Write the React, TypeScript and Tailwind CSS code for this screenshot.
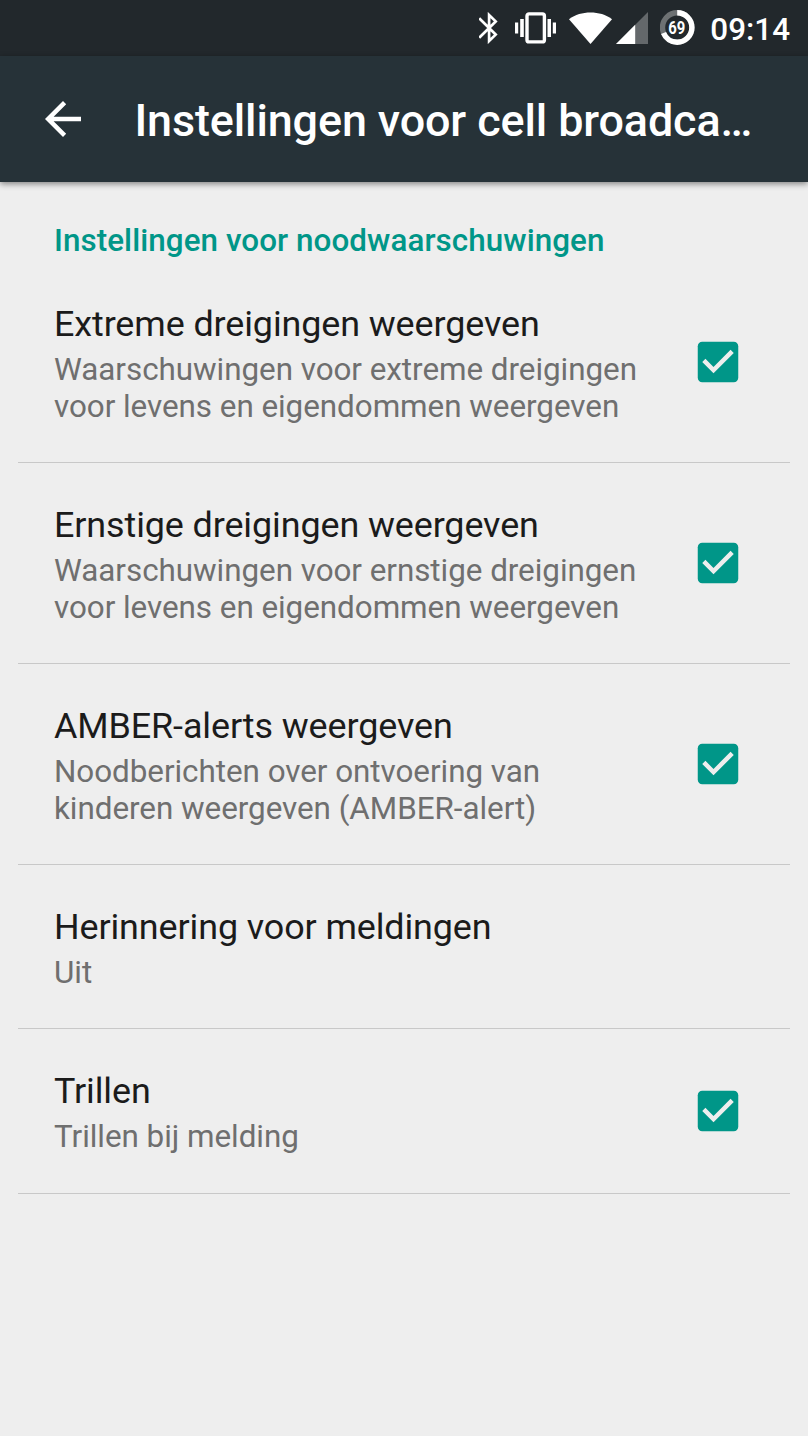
interface Setting {
  title: string
  summary: string
  checked?: boolean
}

const settings: Setting[] = [
  {
    title: 'Extreme dreigingen weergeven',
    summary: 'Waarschuwingen voor extreme dreigingen voor levens en eigendommen weergeven',
    checked: true,
  },
  {
    title: 'Ernstige dreigingen weergeven',
    summary: 'Waarschuwingen voor ernstige dreigingen voor levens en eigendommen weergeven',
    checked: true,
  },
  {
    title: 'AMBER-alerts weergeven',
    summary: 'Noodberichten over ontvoering van kinderen weergeven (AMBER-alert)',
    checked: true,
  },
  { title: 'Herinnering voor meldingen', summary: 'Uit' },
  { title: 'Trillen', summary: 'Trillen bij melding', checked: true },
]

function StatusBar() {
  return (
    <div className="flex h-14 items-center justify-end bg-[#22282c] pr-[18px] text-white">
      <svg className="h-8 w-5" viewBox="0 0 20 32" fill="none" stroke="currentColor" strokeWidth="2.7">
        <path d="M.2 6.2 16.700 22.600 10.100 29V3L16.700 9.400.2 25.800" />
      </svg>
      <svg className="ml-4 h-8 w-[41px]" viewBox="0 0 41 32">
        <rect x="12" y="1.9" width="17.4" height="28" rx="2" fill="none" stroke="currentColor" strokeWidth="3.4" />
        <path d="M0 10.500h3.200v11H0zM5.200 7h3.600v18H5.200zM32.500 7h3.500v18h-3.500zM37.800 10.500H41v11h-3.200z" fill="currentColor" />
      </svg>
      <svg className="ml-[13px] h-8 w-11" viewBox="0 0 44 32">
        <path d="M21.500 32 0 7.200C6.300 2.600 13.500.5 21.500.5s15.300 2.100 21.500 6.700z" fill="currentColor" />
      </svg>
      <svg className="ml-[3px] h-8 w-8" viewBox="0 0 32 32">
        <path d="M0 32 32 0v32z" fill="#64686b" />
        <path d="M0 32 19.200 12.800V32z" fill="currentColor" />
      </svg>
      <svg className="ml-3 h-9 w-9" viewBox="0 0 36 36">
        <circle cx="17.200" cy="17.500" r="14.700" fill="none" stroke="#6d7173" strokeWidth="5.400" />
        <circle
          cx="17.200"
          cy="17.500"
          r="14.700"
          fill="none"
          stroke="currentColor"
          strokeWidth="5.400"
          pathLength="100"
          strokeDasharray="69 31"
          transform="rotate(-90 17.200 17.500)"
        />
        <text
          x="16.800"
          y="24"
          textAnchor="middle"
          textLength="17"
          lengthAdjust="spacingAndGlyphs"
          className="text-[18.5px] font-bold"
          fill="currentColor"
        >
          69
        </text>
      </svg>
      <span className="ml-[14px] pt-[3px] text-[31.4px] leading-none font-medium">09:14</span>
    </div>
  )
}

function Toolbar() {
  return (
    <header className="flex h-[126px] items-center bg-[#263238] pl-9 text-white shadow-[0_2px_6px_rgba(0,0,0,0.45)]">
      <button aria-label="Terug">
        <svg className="h-[54px] w-[54px]" viewBox="0 0 24 24" fill="currentColor">
          <path d="M20 11H7.830l5.590-5.590L12 4l-8 8 8 8 1.410-1.410L7.830 13H20v-2z" />
        </svg>
      </button>
      <h1 className="ml-[44.5px] w-[625px] truncate pt-[3px] text-[44.9px] leading-[53px] font-medium tracking-[-0.11px]">
        Instellingen voor cell broadca…
      </h1>
    </header>
  )
}

function Checkbox() {
  return (
    <svg className="h-[54px] w-[54px] shrink-0" viewBox="0 0 24 24" role="checkbox" aria-checked="true">
      <rect x="3" y="3" width="18" height="18" rx="2" fill="#009688" />
      <path d="M10 17l-5-5 1.410-1.420L10 14.170l7.590-7.590L19 8z" fill="#eee" />
    </svg>
  )
}

function SettingRow({ title, summary, checked }: Setting) {
  return (
    <li className="mx-[18px] flex items-center justify-between border-b border-[#c8c8c8] pr-[45px] pl-9">
      <div className="w-[600px] pt-[40.6px] pb-[36.3px]">
        <div className="text-[35.9px] leading-[42px] tracking-[-0.1px] text-[#1b1b1b]">{title}</div>
        <div className="mt-[7.5px] text-[31.4px] leading-[36.8px] tracking-[-0.04px] text-[#6f6f6f]">{summary}</div>
      </div>
      {checked && <Checkbox />}
    </li>
  )
}

export default function App() {
  return (
    <div className="min-h-[1436px] w-[808px] bg-[#eee] font-[Roboto,sans-serif]">
      <StatusBar />
      <Toolbar />
      <main>
        <h2 className="px-[54px] pt-10 text-[31.4px] leading-[37px] font-medium tracking-[0.06px] text-[#009688]">
          Instellingen voor noodwaarschuwingen
        </h2>
        <ul className="pt-[3.2px]">
          {settings.map((setting) => (
            <SettingRow key={setting.title} {...setting} />
          ))}
        </ul>
      </main>
    </div>
  )
}
